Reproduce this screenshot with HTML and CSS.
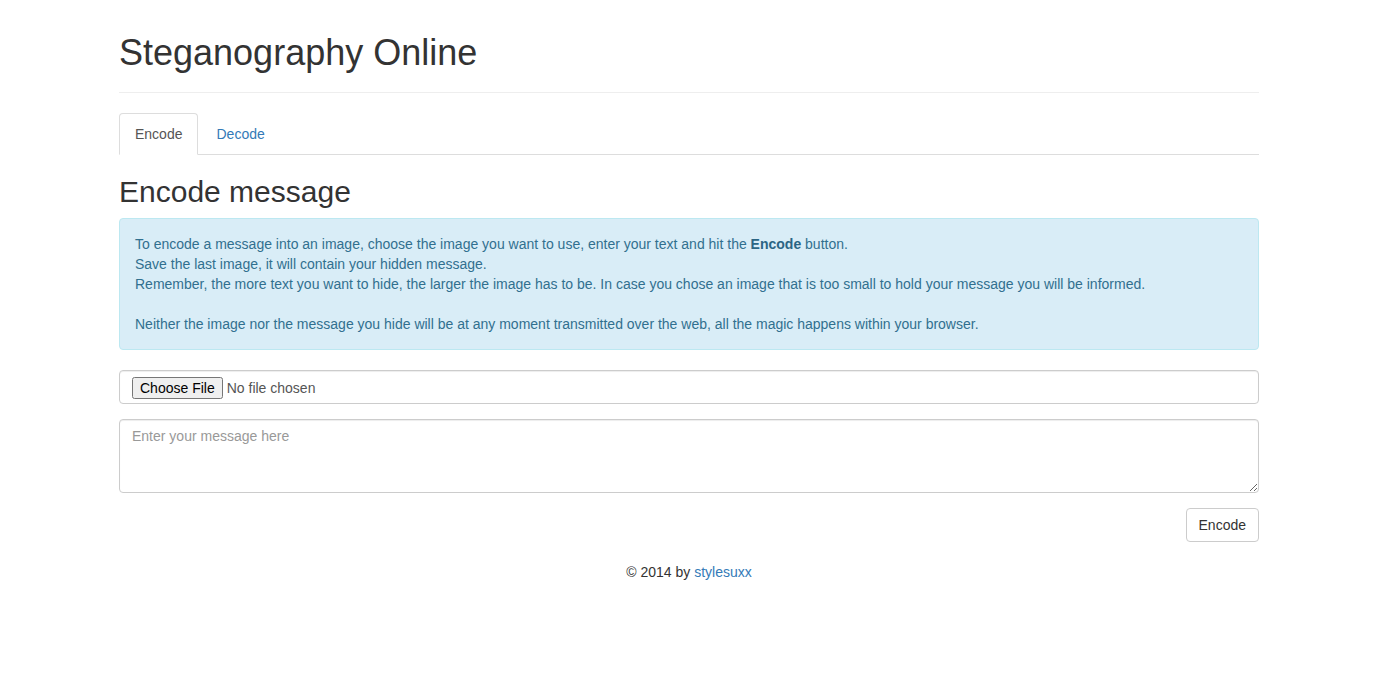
FILE: index.html
```html
<!DOCTYPE html>
<html lang="en">
<head>
<meta charset="utf-8">
<title>Steganography Online</title>
<link rel="stylesheet" href="styles.css">
</head>
<body>
<div class="container">
  <div class="page-header">
    <h1 class="title">Steganography Online</h1>
  </div>
  <ul class="nav-tabs">
    <li class="tab active"><a href="#">Encode</a></li>
    <li class="tab"><a href="#">Decode</a></li>
  </ul>
  <h2 class="section-title">Encode message</h2>
  <div class="alert">
    To encode a message into an image, choose the image you want to use, enter your text and hit the <b>Encode</b> button.<br>
    Save the last image, it will contain your hidden message.<br>
    Remember, the more text you want to hide, the larger the image has to be. In case you chose an image that is too small to hold your message you will be informed.<br>
    <br>
    Neither the image nor the message you hide will be at any moment transmitted over the web, all the magic happens within your browser.
  </div>
  <form class="form">
    <div class="form-group">
      <input type="file" class="form-control file-input">
    </div>
    <div class="form-group">
      <textarea class="form-control textarea" rows="3" placeholder="Enter your message here"></textarea>
    </div>
    <div class="actions">
      <button type="button" class="btn">Encode</button>
    </div>
  </form>
  <footer class="footer">© 2014 by <a href="#">stylesuxx</a></footer>
</div>
</body>
</html>
```
FILE: styles.css
```css
* { box-sizing: border-box; }
html, body { margin: 0; }
body {
  padding-right: 3px;
  font-family: "Liberation Sans", Arial, sans-serif;
  font-size: 14px;
  line-height: 1.42857;
  color: #333;
  background: #fff;
}
a { color: #337ab7; text-decoration: none; }
.container {
  width: 1170px;
  margin: 0 auto;
  padding: 0 15px;
}
.page-header {
  margin: 33px 0 20px;
  padding-bottom: 9px;
  border-bottom: 1px solid #eee;
}
.title {
  margin: 0 0 10px;
  font-size: 36px;
  font-weight: 500;
  line-height: 1.1;
}
.nav-tabs {
  list-style: none;
  margin: 0;
  padding: 0;
  display: flex;
  border-bottom: 1px solid #ddd;
}
.tab { margin-bottom: -1px; margin-right: 2px; }
.tab a {
  display: block;
  padding: 10px 15px;
  line-height: 20px;
  border: 1px solid transparent;
  border-radius: 4px 4px 0 0;
}
.tab.active a {
  color: #555;
  background: #fff;
  border-color: #ddd #ddd transparent;
}
.section-title {
  margin: 20px 0 10px;
  font-size: 30px;
  font-weight: 500;
  line-height: 1.1;
}
.alert {
  padding: 16px 15px 14px;
  margin-bottom: 20px;
  border: 1px solid #bce8f1;
  border-radius: 4px;
  background: #d9edf7;
  color: #31708f;
}
.alert b { color: #2b6584; }
.form { margin: 0; }
.form-group { margin-bottom: 15px; }
.form-control {
  display: block;
  width: 100%;
  padding: 6px 12px;
  font-family: inherit;
  font-size: 14px;
  line-height: 1.42857;
  color: #555;
  background: #fff;
  border: 1px solid #ccc;
  border-radius: 4px;
  box-shadow: inset 0 1px 1px rgba(0,0,0,.075);
}
.file-input { height: 34px; padding-top: 6px; padding-bottom: 4px; }
.textarea { height: 74px; resize: vertical; padding-top: 7px; padding-bottom: 5px; }
.textarea::placeholder { color: #999; }
.actions { display: flex; justify-content: flex-end; }
.btn {
  padding: 7px 12px 5px;
  font-family: inherit;
  font-size: 14px;
  line-height: 1.42857;
  color: #333;
  background: #fff;
  border: 1px solid #ccc;
  border-radius: 4px;
  cursor: pointer;
}
.footer {
  text-align: center;
  margin-top: 20px;
  line-height: 20px;
}
```
